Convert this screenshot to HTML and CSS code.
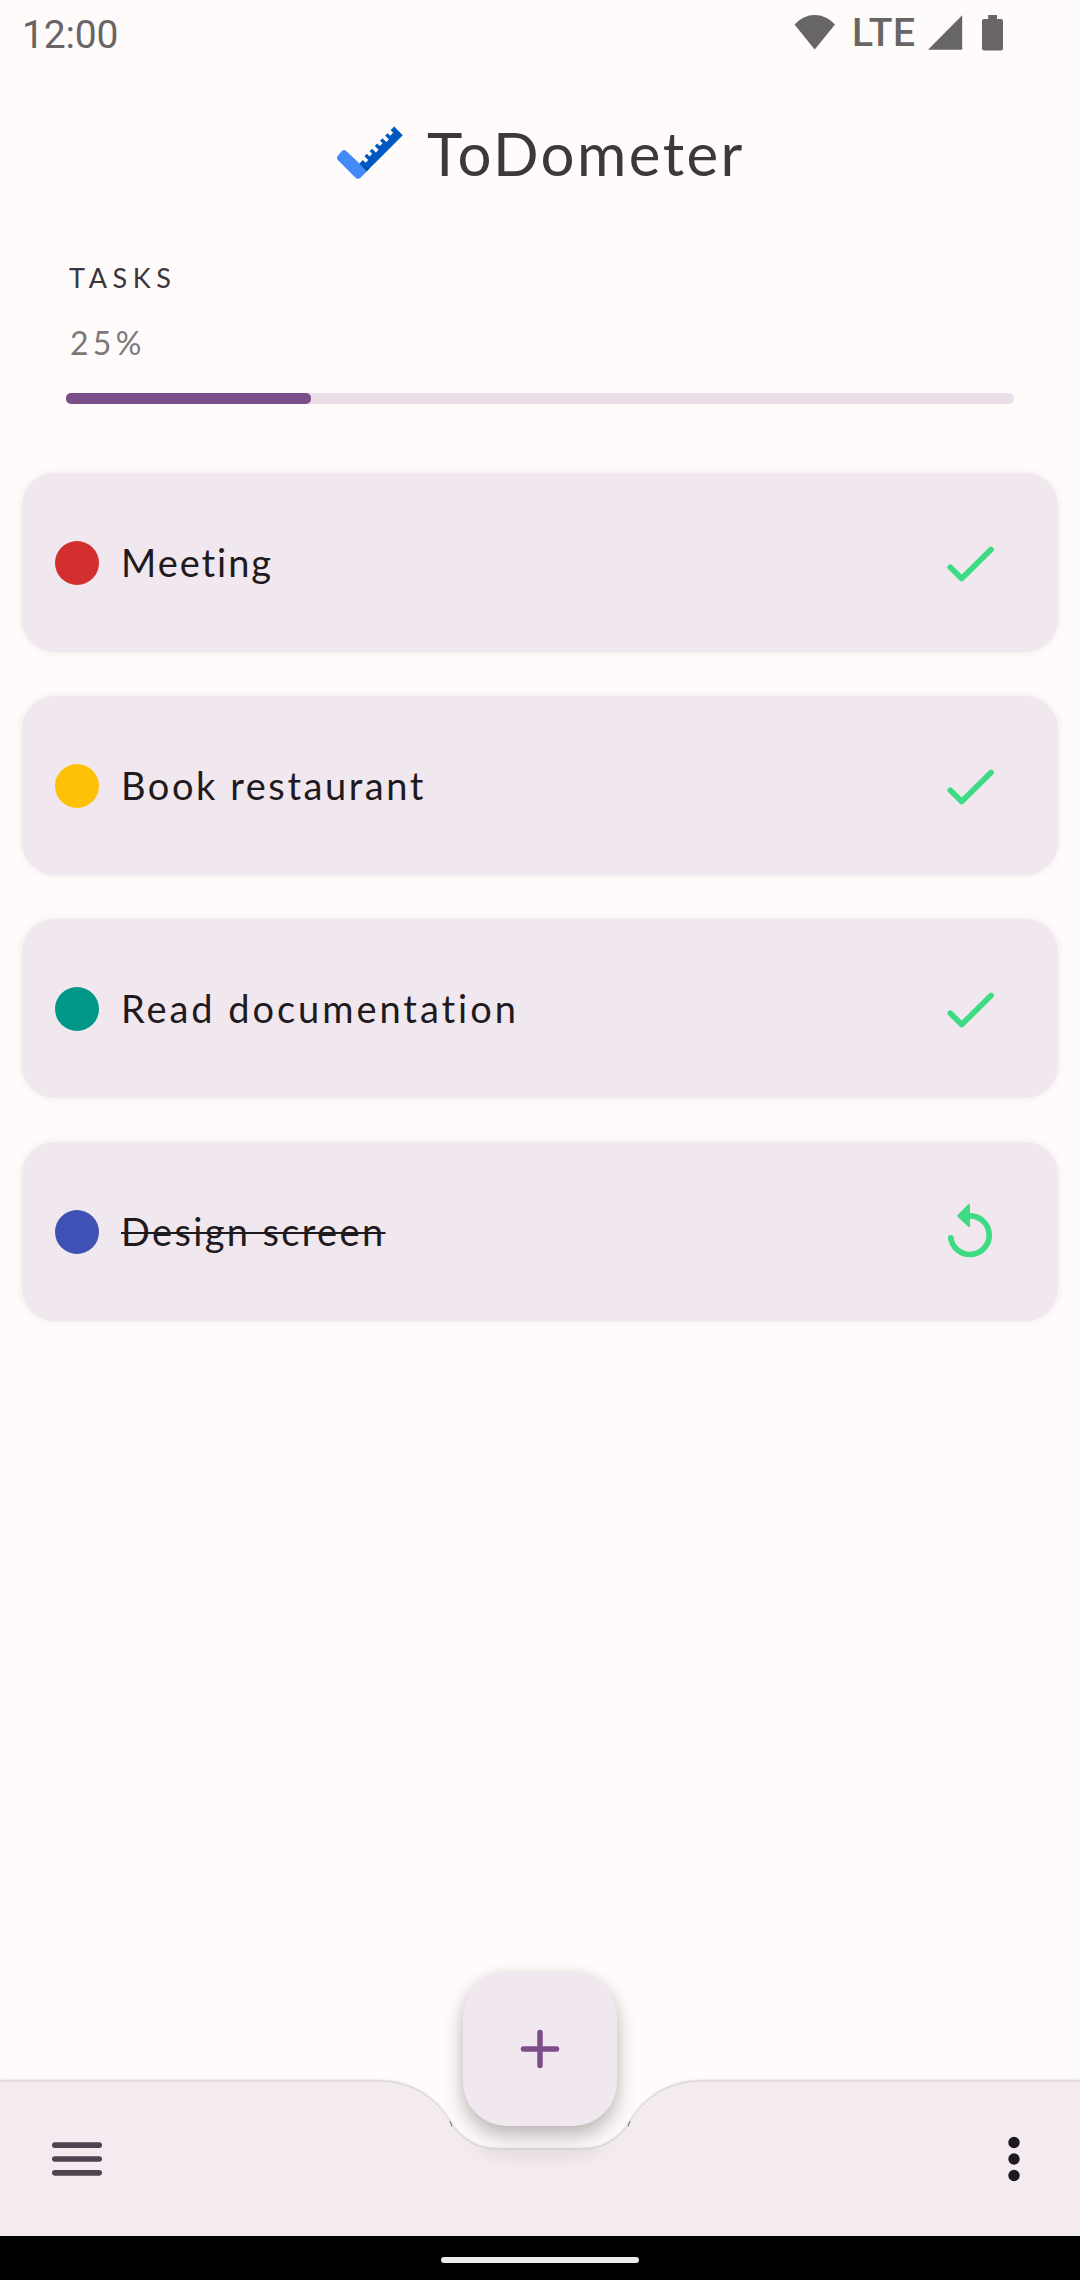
FILE: index.html
```html
<!DOCTYPE html>
<html lang="en">
<head>
<meta charset="utf-8">
<title>ToDometer</title>
<link rel="stylesheet" href="styles.css">
</head>
<body>
<div class="screen">
  <div class="status-bar">
    <span class="clock">12:00</span>
    <div class="status-icons">
      <svg class="wifi" width="42" height="35" viewBox="0 0 42 35"><path d="M.5 9.5Q9 0 20.7 0T41 9.5L20.7 34.5z" fill="#676565"/></svg>
      <span class="network">LTE</span>
      <svg class="signal" width="35" height="35" viewBox="0 0 35 35"><path d="M34.2 .3V34.7H0z" fill="#676565"/></svg>
      <svg class="battery" width="21" height="36" viewBox="0 0 21 36"><path d="M6.2 0H15V4H19a2 2 0 0 1 2 2V33.500a2 2 0 0 1-2 2H2a2 2 0 0 1-2-2V6a2 2 0 0 1 2-2H6.200z" fill="#676565"/></svg>
    </div>
  </div>

  <header class="brand">
    <svg class="logo" width="68" height="54" viewBox="336 126 68 54">
      <g transform="matrix(.7071 -.7071 -.7071 -.7071 366.500 171.500)">
        <path d="M0 0H51.300V12.200H46.300V8.500H42V12.200H38.600V6.800H34.800V12.200H31.300V8.500H27.400V12.200H23.900V6.800H20.100V12.200H16.600V8.500H12.800V12.200H9.300V6.800H5.500V10.600H0z" fill="#0057c2"/>
        <path d="M0 0H4L0 10.600z" fill="#004a9f"/>
      </g>
      <path d="M359 163 366.700 171.500 361 177.200Q358 180.200 355 177.200L338.300 160.500Q335.700 157.900 338.300 155.300L341.200 151.700Q343.700 148.500 346.200 151z" fill="#4389fa"/>
    </svg>
    <h1 class="brand-name">ToDometer</h1>
  </header>

  <section class="progress">
    <h2 class="progress-title">TASKS</h2>
    <p class="progress-value">25%</p>
    <div class="track"><div class="fill"></div></div>
  </section>

  <ul class="tasks">
    <li class="task">
      <span class="dot dot-red"></span><span class="task-name name-meeting">Meeting</span>
      <svg class="task-icon" width="64" height="64" viewBox="0 0 64 64"><path d="M12.300 36.200 23.700 47.600 53 18.500" class="check"/></svg>
    </li>
    <li class="task">
      <span class="dot dot-amber"></span><span class="task-name name-book">Book restaurant</span>
      <svg class="task-icon" width="64" height="64" viewBox="0 0 64 64"><path d="M12.300 36.200 23.700 47.600 53 18.500" class="check"/></svg>
    </li>
    <li class="task">
      <span class="dot dot-teal"></span><span class="task-name name-read">Read documentation</span>
      <svg class="task-icon" width="64" height="64" viewBox="0 0 64 64"><path d="M12.300 36.200 23.700 47.600 53 18.500" class="check"/></svg>
    </li>
    <li class="task">
      <span class="dot dot-indigo"></span><span class="task-name name-design done">Design screen</span>
      <svg class="task-icon" width="64" height="64" viewBox="0 0 64 64"><path d="M32 15.900A19.300 19.300 0 1 1 12.800 37.800" class="arc"/><path d="M19.500 15.100 30 4.600Q32 3 32 5.200V26Q32 28.200 30 26.600L19.500 16.800Q18.500 16 19.500 15.100z" fill="#3ddc84"/></svg>
    </li>
  </ul>

  <nav class="bottom-bar">
    <button class="fab" aria-label="Add task">
      <svg width="40" height="40" viewBox="0 0 40 40"><path d="M20 3.500V36.500M3.500 20H36.500" stroke="#7b4e8a" stroke-width="5.500" stroke-linecap="round"/></svg>
    </button>
    <svg class="bar-shape" width="1080" height="164" viewBox="0 -9 1080 164">
      <defs>
        <filter id="soft" x="-20%" y="-50%" width="140%" height="200%"><feGaussianBlur stdDeviation="7"/></filter>
        <clipPath id="bar"><path d="M0 0H380A80 80 0 0 1 451 43Q469 68.500 497 68.500H583Q611 68.500 629 43A80 80 0 0 1 700 0H1080V155H0z"/></clipPath>
      </defs>
      <path class="bar-fill" d="M0 .5H380A80 80 0 0 1 451 43Q469 68.500 497 68.500H583Q611 68.500 629 43A80 80 0 0 1 700 .5H1080V155H0z"/>
      <g clip-path="url(#bar)"><rect x="470" y="20" width="140" height="57" rx="40" fill="#000" opacity=".06" filter="url(#soft)"/></g>
      <path d="M450 40 452 45.500M630 40 628 45.500" stroke="#85818a" stroke-width="1.200"/>
    </svg>
    <svg class="menu" width="50" height="36" viewBox="0 0 50 36"><path d="M2.800 4.200H47.200M2.800 18H47.200M2.800 31.800H47.200" stroke="#4d4450" stroke-width="5.700" stroke-linecap="round"/></svg>
    <svg class="more" width="12" height="46" viewBox="0 0 12 46"><g fill="#1f1a20"><circle cx="6" cy="6.500" r="5.700"/><circle cx="6" cy="23" r="5.700"/><circle cx="6" cy="39.500" r="5.700"/></g></svg>
  </nav>
  <div class="gesture-bar"><div class="pill"></div></div>
</div>
</body>
</html>
```
FILE: styles.css
```css
* { box-sizing: border-box; margin: 0; padding: 0; }

body {
  background: #fffbfb;
  font-family: Lato, "Open Sans", sans-serif;
  color: #1f1a20;
}

.screen {
  width: 1080px;
  height: 2280px;
  display: flex;
  flex-direction: column;
  overflow: hidden;
}

.status-bar {
  height: 66px;
  padding: 0 77px 0 22px;
  display: flex;
  justify-content: space-between;
  align-items: flex-start;
  font-family: Roboto, sans-serif;
  font-size: 39px;
  line-height: 46px;
  color: #676565;
}
.clock { padding-top: 12px; letter-spacing: -.2px; }
.status-icons { display: flex; align-items: flex-start; }
.wifi { margin-top: 15px; }
.network { width: 92px; padding: 10px 0 0 16px; font-weight: 500; letter-spacing: .5px; }
.signal { margin-top: 15px; }
.battery { margin: 15px 0 0 19px; }

.brand {
  height: 178px;
  padding: 51px 0 0 336px;
  display: flex;
  align-items: flex-start;
  gap: 23px;
}
.logo { margin-top: 9px; }
.brand-name {
  font-size: 60px;
  line-height: 72px;
  font-weight: 400;
  letter-spacing: 2.4px;
  color: #3e383d;
}

.progress { height: 229px; padding: 18px 66px 0; }
.progress-title {
  padding-left: 3px;
  font-size: 27px;
  line-height: 32px;
  font-weight: 400;
  letter-spacing: 5.6px;
  color: #3a353a;
}
.progress-value {
  padding: 30px 0 0 4px;
  font-size: 32px;
  line-height: 38px;
  letter-spacing: 4.3px;
  color: #7b787a;
}
.track {
  height: 11px;
  margin-top: 31px;
  border-radius: 5px;
  background: #eadfe9;
}
.fill {
  width: 244.5px;
  height: 11px;
  border-radius: 5px;
  background: #7b4e8a;
}

.tasks {
  flex: 1;
  padding: 0 22px;
  display: flex;
  flex-direction: column;
  gap: 44px;
  list-style: none;
}
.task {
  height: 179px;
  padding: 0 56px 0 33px;
  display: flex;
  align-items: center;
  border-radius: 33px;
  background: #f0e8ee;
  box-shadow: 0 0 7px rgba(50, 45, 30, .09);
}
.dot { width: 44px; height: 44px; border-radius: 50%; }
.dot-red { background: #d32f2f; }
.dot-amber { background: #ffc107; }
.dot-teal { background: #009688; }
.dot-indigo { background: #3f51b5; }
.task-name {
  margin-left: 22px;
  padding-bottom: 2px;
  font-size: 38px;
  line-height: 46px;
}
.name-meeting { letter-spacing: 1.95px; }
.name-book { letter-spacing: 2.55px; }
.name-read { letter-spacing: 2.95px; }
.name-design { letter-spacing: 2.35px; }
.done { text-decoration: line-through; text-decoration-thickness: 2px; }
.task-icon { margin-left: auto; }
.check, .arc {
  fill: none;
  stroke: #3ddc84;
  stroke-width: 5.7px;
  stroke-linecap: round;
  stroke-linejoin: round;
}

.bottom-bar {
  position: relative;
  height: 155px;
  padding: 0 60px 0 52px;
  display: flex;
  align-items: center;
  justify-content: space-between;
}
.bar-shape {
  position: absolute;
  left: 0;
  top: -9px;
  pointer-events: none;
}
.bar-fill {
  fill: #f4ebf0;
  filter: drop-shadow(0 -1px 1.2px rgba(40, 40, 35, .28));
}
.fab {
  position: absolute;
  left: 463px;
  top: -109px;
  width: 154px;
  height: 154px;
  display: flex;
  align-items: center;
  justify-content: center;
  border: 0;
  border-radius: 44px;
  background: #f0e8ee;
  box-shadow: 0 11px 20px rgba(30, 30, 25, .28), 0 0 12px rgba(30, 30, 25, .06);
}
.menu, .more { position: relative; }

.gesture-bar {
  height: 44px;
  display: flex;
  align-items: center;
  justify-content: center;
  background: #000;
}
.pill { width: 198px; height: 6px; margin-top: 4px; border-radius: 3px; background: #ebebeb; }
```
